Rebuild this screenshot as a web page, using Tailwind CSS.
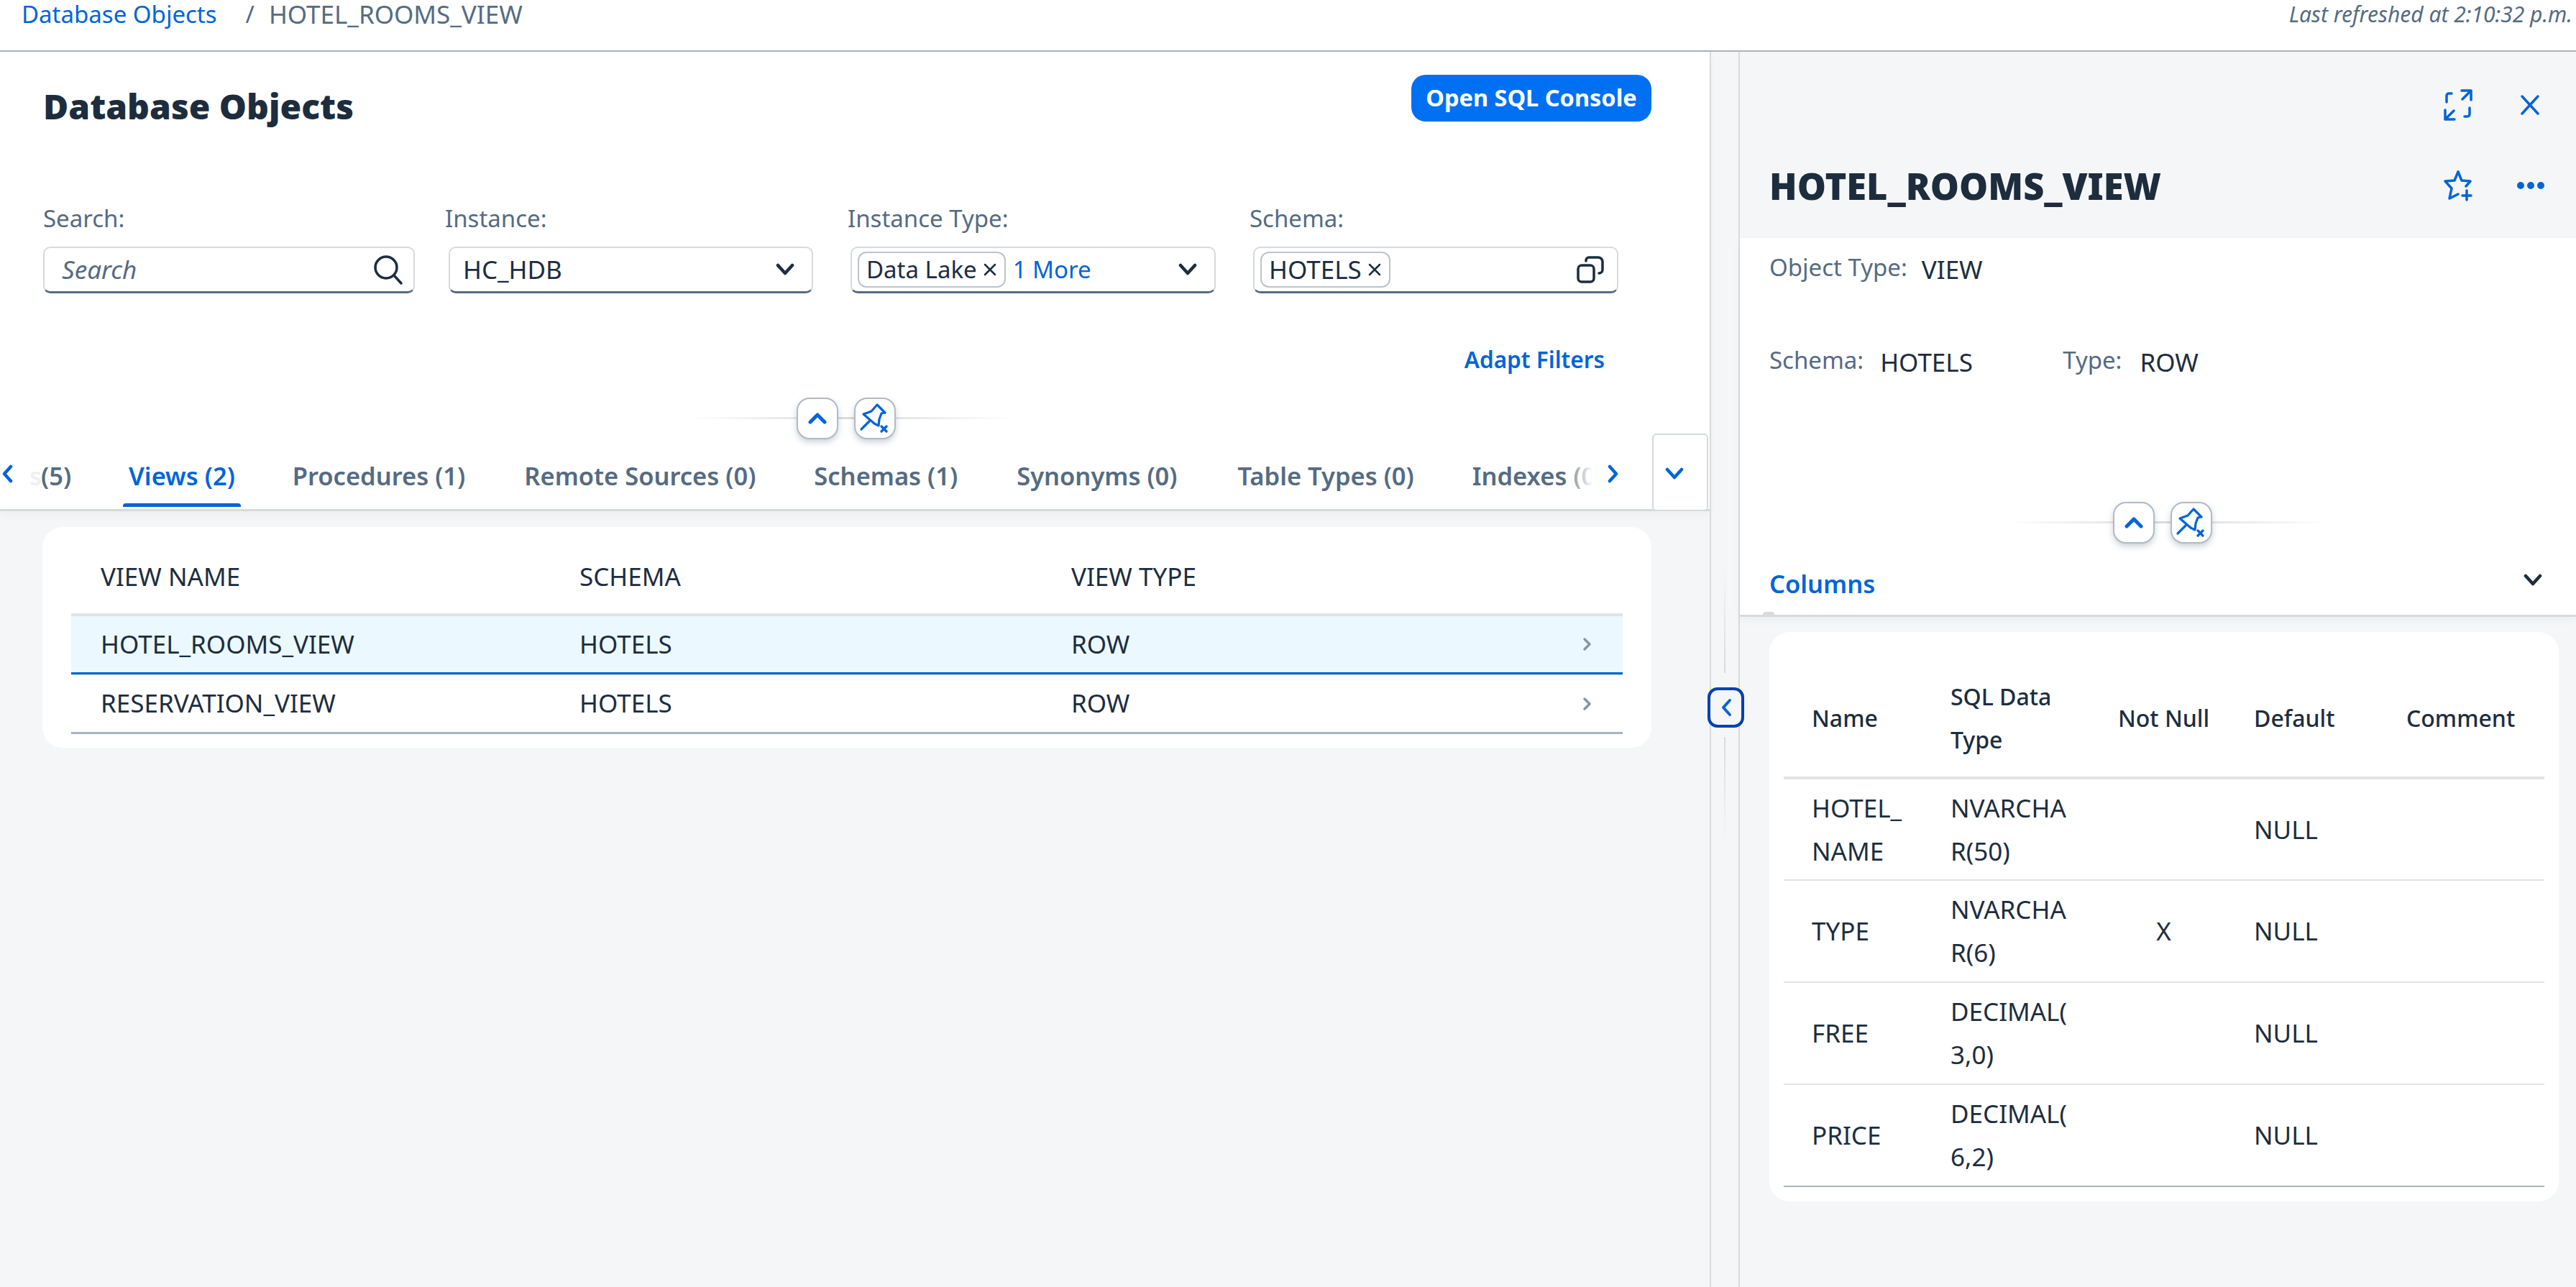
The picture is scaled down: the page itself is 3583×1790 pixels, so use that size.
<!DOCTYPE html>
<html lang="en">
<head>
    <meta charset="UTF-8">
    <meta name="viewport" content="width=device-width, initial-scale=1.0">
    <title>Database Objects</title>
    <script src="https://cdn.jsdelivr.net/npm/@tailwindcss/browser@4"></script>
</head>
<body class="bg-[#f5f6f7] font-['Noto_Sans',sans-serif] text-[#1d2d3e]">
<div class="w-[3583px] h-[1790px] overflow-hidden flex flex-col">
    <!-- Breadcrumb bar -->
    <header class="h-[72px] shrink-0 bg-white border-b-2 border-[#a9b4be] flex justify-between pl-[30px] pr-[5px]">
        <div class="flex text-[33px] leading-[40px] text-[#556b82]">
            <a class="text-[#0064d9]">Database Objects</a>
            <span class="ml-[40px]">/</span>
            <span class="ml-[20px] text-[35px]">HOTEL_ROOMS_VIEW</span>
        </div>
        <div class="text-[30px] leading-[40px] italic text-[#556b82]">Last refreshed at 2:10:32 p.m.</div>
    </header>

    <div class="flex flex-1 min-h-0">
        <!-- Left panel -->
        <section class="w-[2378px] shrink-0 flex flex-col">
            <div class="h-[639px] bg-white border-b-[3px] border-[#d9dadb] shadow-[0_4px_12px_rgba(0,0,0,0.04)] relative">
                <div class="h-[97px] pt-[32px] pl-[60px] pr-[81px] flex justify-between items-start">
                    <h1 class="text-[48px] leading-[60px] font-black mt-[14px]">Database Objects</h1>
                    <button class="w-[334px] h-[65px] rounded-[20px] bg-[#0070f2] text-white text-[32.5px] font-bold">Open SQL Console</button>
                </div>
                <!-- Filter bar -->
                <div class="flex pl-[60px] mt-[115px]">
                    <div class="w-[559px]">
                        <label class="block text-[33px] leading-[40px] text-[#556b82]">Search:</label>
                        <div class="mt-[19px] w-[517px] h-[65px] bg-white border-2 border-[#d5dadd] border-b-[3px] border-b-[#556b82] rounded-[10px] flex items-center justify-between pl-[24px] pr-[14px]">
                            <span class="text-[35px] italic text-[#556b82]">Search</span>
                            <svg class="w-[44px] h-[44px]" viewBox="0 0 44 44" fill="none" stroke="#1d2d3e" stroke-width="3.5" stroke-linecap="round"><circle cx="20" cy="19" r="15"/><path d="M31 30l10 11"/></svg>
                        </div>
                    </div>
                    <div class="w-[560px]">
                        <label class="block text-[33px] leading-[40px] text-[#556b82]">Instance:</label>
                        <div class="mt-[19px] ml-[5px] w-[507px] h-[65px] bg-white border-2 border-[#d5dadd] border-b-[3px] border-b-[#556b82] rounded-[10px] flex items-center justify-between pl-[18px] pr-[24px]">
                            <span class="text-[35px]">HC_HDB</span>
                            <svg class="w-[26px] h-[18px]" viewBox="0 0 26 18" fill="none" stroke="#1d2d3e" stroke-width="4.5" stroke-linecap="round" stroke-linejoin="round"><path d="M3 3l10 11L23 3"/></svg>
                        </div>
                    </div>
                    <div class="w-[559px]">
                        <label class="block text-[33px] leading-[40px] text-[#556b82]">Instance Type:</label>
                        <div class="mt-[19px] ml-[4px] w-[508px] h-[65px] bg-white border-2 border-[#d5dadd] border-b-[3px] border-b-[#556b82] rounded-[10px] flex items-center pl-[8px] pr-[24px]">
                            <span class="h-[50px] px-[10px] border-2 border-[#bcc3ca] rounded-[12px] flex items-center gap-[8px] text-[33px]">Data Lake
                                <svg class="w-[20px] h-[20px]" viewBox="0 0 20 20" stroke="#1d2d3e" stroke-width="2.5" stroke-linecap="round"><path d="M3 3l14 14M17 3L3 17"/></svg>
                            </span>
                            <span class="ml-[10px] text-[33px] text-[#0064d9]">1 More</span>
                            <svg class="ml-auto w-[26px] h-[18px]" viewBox="0 0 26 18" fill="none" stroke="#1d2d3e" stroke-width="4.5" stroke-linecap="round" stroke-linejoin="round"><path d="M3 3l10 11L23 3"/></svg>
                        </div>
                    </div>
                    <div>
                        <label class="block text-[33px] leading-[40px] text-[#556b82]">Schema:</label>
                        <div class="mt-[19px] ml-[5px] w-[508px] h-[65px] bg-white border-2 border-[#d5dadd] border-b-[3px] border-b-[#556b82] rounded-[10px] flex items-center pl-[8px] pr-[18px]">
                            <span class="h-[50px] px-[10px] border-2 border-[#bcc3ca] rounded-[12px] flex items-center gap-[8px] text-[35px]">HOTELS
                                <svg class="w-[20px] h-[20px]" viewBox="0 0 20 20" stroke="#1d2d3e" stroke-width="2.5" stroke-linecap="round"><path d="M3 3l14 14M17 3L3 17"/></svg>
                            </span>
                            <svg class="ml-auto w-[38px] h-[38px]" viewBox="0 0 38 38" fill="none" stroke="#1d2d3e" stroke-width="3.5" stroke-linecap="round"><rect x="2" y="13" width="22" height="23" rx="5"/><path d="M13 7V6a4 4 0 0 1 4-4h13a6 6 0 0 1 6 6v11a5 5 0 0 1-5 5"/></svg>
                        </div>
                    </div>
                </div>
                <div class="mt-[72px] pr-[146px] text-right text-[31.5px] leading-[40px] font-semibold text-[#0064d9]">Adapt Filters</div>

                <!-- Header collapse and pin -->
                <div class="absolute left-[959px] top-[480px] w-[450px] h-[60px] flex items-center justify-center">
                    <div class="absolute inset-x-0 top-[28px] h-[3px] bg-gradient-to-r from-transparent via-[#d9dadb] to-transparent"></div>
                    <button class="relative ml-[-14px] w-[58px] h-[58px] bg-white border-2 border-[#b0bac4] rounded-[18px] shadow-[0_4px_8px_rgba(85,107,130,0.3)] flex items-center justify-center">
                        <svg class="w-[26px] h-[18px]" viewBox="0 0 26 18" fill="none" stroke="#0064d9" stroke-width="5" stroke-linecap="round" stroke-linejoin="round"><path d="M3 14L13 4l10 10"/></svg>
                    </button>
                    <button class="relative ml-[22px] w-[58px] h-[58px] bg-white border-2 border-[#b0bac4] rounded-[18px] shadow-[0_4px_8px_rgba(85,107,130,0.3)] flex items-center justify-center">
                        <svg class="w-[44px] h-[44px]" viewBox="0 0 44 44" fill="none" stroke="#0064d9" stroke-width="3.2" stroke-linecap="round" stroke-linejoin="round"><path d="M25 3l11 11-5 1-3 8-1 9-6-3-15-13 11-4z"/><path d="M14 26L3 37"/><path d="M31 33l7 7M38 33l-7 7" stroke-width="3.4"/></svg>
                    </button>
                </div>

                <!-- Tabs -->
                <div class="absolute left-0 right-0 bottom-[-3px] h-[108px]">
                    <svg class="absolute left-[2px] top-[43px] w-[16px] h-[26px]" viewBox="0 0 16 26" fill="none" stroke="#0064d9" stroke-width="4.5" stroke-linecap="round" stroke-linejoin="round"><path d="M13 3L4 13l9 10"/></svg>
                    <div class="flex items-center h-[108px] pt-[10px] pl-[41px] text-[34.5px] font-semibold text-[#556b82] whitespace-nowrap">
                        <span class="w-[16px] overflow-hidden opacity-10">s</span>
                        <span>(5)</span>
                        <span class="relative ml-[80px] text-[#0064d9]">Views (2)<span class="absolute left-[-8px] right-[-8px] top-[64px] h-[5px] rounded-t-[4px] bg-[#0064d9]"></span></span>
                        <span class="ml-[80px]">Procedures (1)</span>
                        <span class="ml-[82px]">Remote Sources (0)</span>
                        <span class="ml-[81px]">Schemas (1)</span>
                        <span class="ml-[82px]">Synonyms (0)</span>
                        <span class="ml-[84px]">Table Types (0)</span>
                        <span class="relative ml-[81px] w-[167px] overflow-hidden">Indexes (0)<span class="absolute right-0 top-0 bottom-0 w-[40px] bg-gradient-to-r from-transparent to-white"></span></span>
                    </div>
                    <svg class="absolute left-[2236px] top-[43px] w-[16px] h-[26px]" viewBox="0 0 16 26" fill="none" stroke="#0064d9" stroke-width="4.5" stroke-linecap="round" stroke-linejoin="round"><path d="M3 3l9 10-9 10"/></svg>
                    <button class="absolute left-[2298px] top-0 w-[78px] h-[108px] bg-white border-2 border-[#d5dadd] rounded-[6px] flex items-center justify-center pr-[16px]">
                        <svg class="w-[26px] h-[18px] mt-[4px]" viewBox="0 0 26 18" fill="none" stroke="#0064d9" stroke-width="4.5" stroke-linecap="round" stroke-linejoin="round"><path d="M3 3l10 11L23 3"/></svg>
                    </button>
                </div>
            </div>

            <!-- Views table -->
            <div class="ml-[59px] mt-[22px] w-[2238px] h-[307px] bg-white rounded-[28px] px-[40px] text-[35px]">
                <div class="flex items-center h-[124px] pt-[18px] border-b-4 border-[#e2e3e4]">
                    <span class="w-[707px] pl-[41px]">VIEW NAME</span>
                    <span class="w-[684px]">SCHEMA</span>
                    <span>VIEW TYPE</span>
                </div>
                <div class="flex items-center h-[81px] bg-[#ebf8ff] border-b-[3px] border-[#0064d9]">
                    <span class="w-[707px] pl-[41px]">HOTEL_ROOMS_VIEW</span>
                    <span class="w-[684px]">HOTELS</span>
                    <span>ROW</span>
                    <svg class="ml-auto mr-[42px] w-[14px] h-[20px]" viewBox="0 0 14 20" fill="none" stroke="#8396a8" stroke-width="3.5" stroke-linecap="round" stroke-linejoin="round"><path d="M3 3l7 7-7 7"/></svg>
                </div>
                <div class="flex items-center h-[83px] border-t border-[#d9dadb] border-b-[3px] border-b-[#a9b4be]">
                    <span class="w-[707px] pl-[41px]">RESERVATION_VIEW</span>
                    <span class="w-[684px]">HOTELS</span>
                    <span>ROW</span>
                    <svg class="ml-auto mr-[42px] w-[14px] h-[20px]" viewBox="0 0 14 20" fill="none" stroke="#8396a8" stroke-width="3.5" stroke-linecap="round" stroke-linejoin="round"><path d="M3 3l7 7-7 7"/></svg>
                </div>
            </div>
        </section>

        <!-- Column divider -->
        <div class="relative w-[42px] shrink-0 border-x-2 border-[#d9dadb]">
            <div class="absolute left-[18px] top-[716px] w-[2px] h-[148px] bg-gradient-to-b from-transparent to-[#d9dadb]"></div>
            <button class="absolute left-[-5px] top-[884px] w-[51px] h-[56px] bg-[#f5f6f7] border-[4px] border-[#0040b0] rounded-[14px] flex items-center justify-center">
                <svg class="w-[16px] h-[26px]" viewBox="0 0 16 26" fill="none" stroke="#0064d9" stroke-width="4" stroke-linecap="round" stroke-linejoin="round"><path d="M13 3L4 13l9 10"/></svg>
            </button>
            <div class="absolute left-[18px] top-[953px] w-[2px] h-[148px] bg-gradient-to-b from-[#d9dadb] to-transparent"></div>
        </div>

        <!-- Right panel -->
        <aside class="flex-1 min-w-0 flex flex-col">
            <div class="h-[259px] shrink-0 bg-[#f5f6f7] relative pl-[41px]">
                <div class="absolute left-[978px] top-[52px] flex items-center gap-[65px]">
                    <svg class="w-[42px] h-[44px]" viewBox="0 0 42 44" fill="none" stroke="#0064d9" stroke-width="3.5" stroke-linecap="round" stroke-linejoin="round"><path d="M26 2h13v13M39 2L27 14M16 42H3V29M3 42l12-12"/><path d="M5 18V9a3 3 0 0 1 3-3h4M37 26v9a3 3 0 0 1-3 3h-4"/></svg>
                    <svg class="w-[28px] h-[28px]" viewBox="0 0 28 28" stroke="#0064d9" stroke-width="3.5" stroke-linecap="round"><path d="M3 2l22 24M25 2L3 26"/></svg>
                </div>
                <h2 class="pt-[157px] text-[50.5px] leading-[60px] font-black absolute top-0">HOTEL_ROOMS_VIEW</h2>
                <div class="absolute left-[978px] top-[164px] flex items-center gap-[60px]">
                    <svg class="w-[42px] h-[44px]" viewBox="0 0 42 44" fill="none" stroke="#0064d9" stroke-width="3.5" stroke-linecap="round" stroke-linejoin="round"><path d="M21 3l5 12 12 1-6 7"/><path d="M21 3l-5 12-13 1 9 10-3 14 12-6"/><path d="M33 29v13M27 36h12"/></svg>
                    <svg class="w-[40px] h-[12px]" viewBox="0 0 40 12" fill="#0064d9"><circle cx="6" cy="6" r="5"/><circle cx="20" cy="6" r="5"/><circle cx="34" cy="6" r="5"/></svg>
                </div>
            </div>
            <div class="h-[527px] shrink-0 bg-white border-b-[3px] border-[#d9dadb] shadow-[0_4px_12px_rgba(0,0,0,0.04)] relative pl-[41px] text-[33px] leading-[40px]">
                <div class="pt-[21px] flex"><span class="text-[#556b82]">Object Type:</span><span class="ml-[20px] mt-[3px] text-[35px]">VIEW</span></div>
                <div class="mt-[86px] flex"><span class="text-[#556b82]">Schema:</span><span class="ml-[23px] mt-[3px] w-[254px] text-[35px]">HOTELS</span><span class="text-[#556b82]">Type:</span><span class="ml-[25px] mt-[3px] text-[35px]">ROW</span></div>
                <div class="absolute left-[370px] top-[366px] w-[450px] h-[60px] flex items-center justify-center">
                    <div class="absolute inset-x-0 top-[28px] h-[3px] bg-gradient-to-r from-transparent via-[#d9dadb] to-transparent"></div>
                    <button class="relative ml-[-14px] w-[58px] h-[58px] bg-white border-2 border-[#b0bac4] rounded-[18px] shadow-[0_4px_8px_rgba(85,107,130,0.3)] flex items-center justify-center">
                        <svg class="w-[26px] h-[18px]" viewBox="0 0 26 18" fill="none" stroke="#0064d9" stroke-width="5" stroke-linecap="round" stroke-linejoin="round"><path d="M3 14L13 4l10 10"/></svg>
                    </button>
                    <button class="relative ml-[22px] w-[58px] h-[58px] bg-white border-2 border-[#b0bac4] rounded-[18px] shadow-[0_4px_8px_rgba(85,107,130,0.3)] flex items-center justify-center">
                        <svg class="w-[44px] h-[44px]" viewBox="0 0 44 44" fill="none" stroke="#0064d9" stroke-width="3.2" stroke-linecap="round" stroke-linejoin="round"><path d="M25 3l11 11-5 1-3 8-1 9-6-3-15-13 11-4z"/><path d="M14 26L3 37"/><path d="M31 33l7 7M38 33l-7 7" stroke-width="3.4"/></svg>
                    </button>
                </div>
                <div class="absolute left-[41px] top-[461px] text-[34.5px] font-semibold text-[#0064d9]">Columns</div>
                <div class="absolute left-[32px] bottom-0 w-[16px] h-[4px] rounded-t-[4px] bg-[#d9dadb]"></div>
                <svg class="absolute left-[1090px] top-[467px] w-[26px] h-[18px]" viewBox="0 0 26 18" fill="none" stroke="#1d2d3e" stroke-width="4.5" stroke-linecap="round" stroke-linejoin="round"><path d="M3 3l10 11L23 3"/></svg>
            </div>

            <!-- Columns table -->
            <div class="ml-[41px] mt-[21px] w-[1098px] h-[792px] bg-white rounded-[28px] px-[20px] pt-[23px] text-[35px] leading-[60px]">
                <table class="w-[1058px] table-fixed border-collapse">
                    <thead>
                        <tr class="h-[180px] border-b-4 border-[#e2e3e4] text-[32px] text-left">
                            <th class="w-[191px] pl-[39px] pt-[16px] font-medium">Name</th>
                            <th class="w-[234px] pl-[41px] pr-[10px] pt-[16px] font-medium">SQL Data Type</th>
                            <th class="w-[189px] pl-[18px] pt-[16px] text-center font-medium">Not Null</th>
                            <th class="w-[212px] pl-[40px] pt-[16px] font-medium">Default</th>
                            <th class="pl-[40px] pt-[16px] font-medium">Comment</th>
                        </tr>
                    </thead>
                    <tbody>
                        <tr class="h-[142px] border-b-2 border-[#e2e3e4]"><td class="pl-[39px]">HOTEL_<br>NAME</td><td class="pl-[41px]">NVARCHA<br>R(50)</td><td></td><td class="pl-[40px]">NULL</td><td></td></tr>
                        <tr class="h-[142px] border-b-2 border-[#e2e3e4]"><td class="pl-[39px]">TYPE</td><td class="pl-[41px]">NVARCHA<br>R(6)</td><td class="pl-[18px] text-center">X</td><td class="pl-[40px]">NULL</td><td></td></tr>
                        <tr class="h-[142px] border-b-2 border-[#e2e3e4]"><td class="pl-[39px]">FREE</td><td class="pl-[41px]">DECIMAL(<br>3,0)</td><td></td><td class="pl-[40px]">NULL</td><td></td></tr>
                        <tr class="h-[142px] border-b-2 border-[#a9b4be]"><td class="pl-[39px]">PRICE</td><td class="pl-[41px]">DECIMAL(<br>6,2)</td><td></td><td class="pl-[40px]">NULL</td><td></td></tr>
                    </tbody>
                </table>
            </div>
        </aside>
    </div>
</div>
</body>
</html>
